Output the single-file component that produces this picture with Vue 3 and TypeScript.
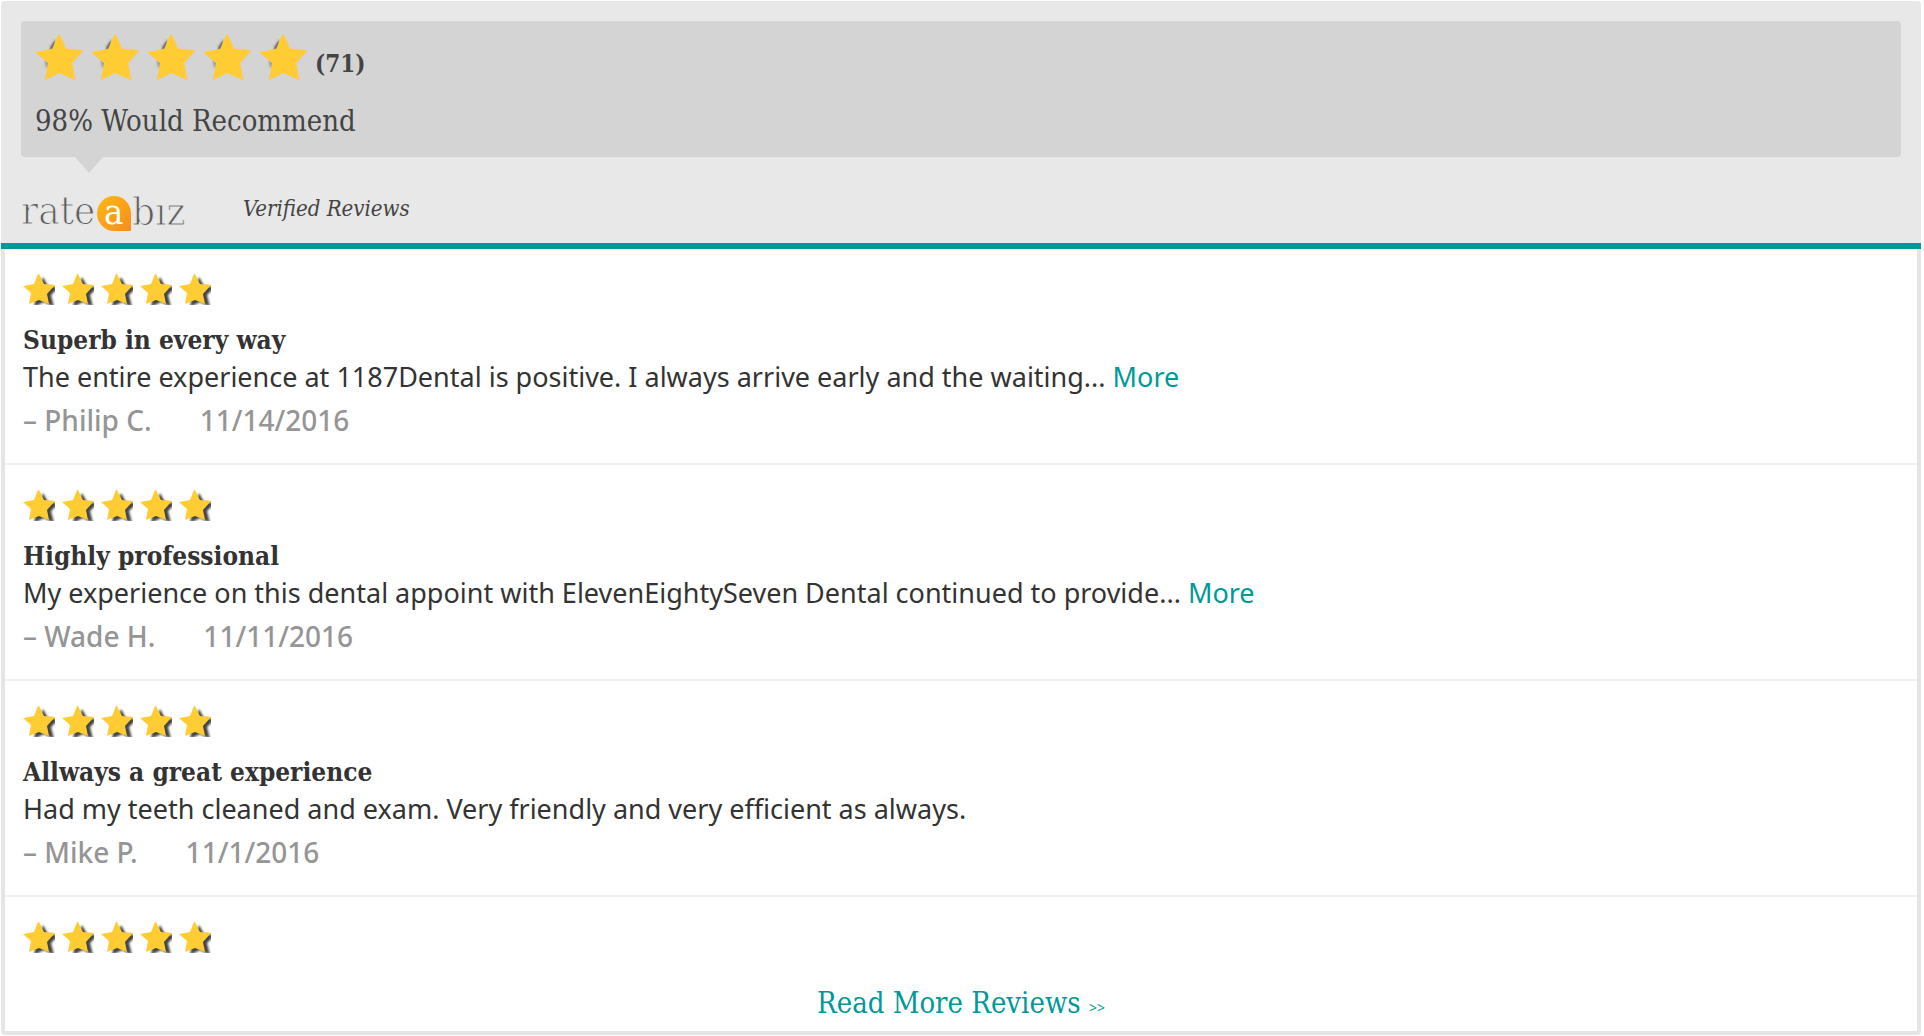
<script setup lang="ts">
interface Review {
  title?: string
  text?: string
  truncated?: boolean
  author?: string
  date?: string
}

const count = 71
const recommend = 98

const reviews: Review[] = [
  {
    title: 'Superb in every way',
    text: 'The entire experience at 1187Dental is positive. I always arrive early and the waiting...',
    truncated: true,
    author: 'Philip C.',
    date: '11/14/2016',
  },
  {
    title: 'Highly professional',
    text: 'My experience on this dental appoint with ElevenEightySeven Dental continued to provide...',
    truncated: true,
    author: 'Wade H.',
    date: '11/11/2016',
  },
  {
    title: 'Allways a great experience',
    text: 'Had my teeth cleaned and exam. Very friendly and very efficient as always.',
    author: 'Mike P.',
    date: '11/1/2016',
  },
  {},
]
</script>

<template>
  <section class="widget">
    <header class="head">
      <div class="summary">
        <div class="rating">
          <svg v-for="n in 5" :key="n" class="star-lg" viewBox="0 0 49 46" aria-hidden="true">
            <polygon class="shade" points="20,5 15,13 16,16 22,12" />
            <polygon class="shade faint" points="10,25 11,33 16,28" />
            <polygon class="glow" points="25,0 31,13 49,16 37,28 41,45 25,36" />
            <polygon class="gold" points="23,0 25,0 31,14 48,15 37,28 40,45 24,38 10,45 13,28 0,17 17,14" />
          </svg>
          <strong class="count">({{ count }})</strong>
        </div>
        <p class="recommend">{{ recommend }}% Would Recommend</p>
      </div>
      <div class="source">
        <svg class="logo" viewBox="0 0 168 40" role="img" aria-label="rateabiz">
          <defs>
            <linearGradient id="badge" x1="0" y1="0" x2="1" y2="1">
              <stop offset="0" stop-color="#fdb913" />
              <stop offset="1" stop-color="#f78d1e" />
            </linearGradient>
          </defs>
          <text class="word" x="0" y="32">rate</text>
          <path d="M76 21.500a17 17.500 0 0 1 34 0V39H93a17 17.500 0 0 1-17-17.500z" fill="url(#badge)" />
          <text class="mark" x="83" y="32">a</text>
          <text class="word" x="111" y="33">bız</text>
        </svg>
        <em class="verified">Verified Reviews</em>
      </div>
    </header>

    <ul class="list">
      <li v-for="(r, i) in reviews" :key="i" class="review">
        <div class="stars">
          <svg v-for="n in 5" :key="n" class="star-sm" viewBox="0 0 32 31" aria-hidden="true">
            <polygon class="cast" points="20,3 25,12 36,13 28,21 31,33 21,28 11,33 13,22 6,14 16,13" />
            <polygon class="gold" points="15,0 16,0 21,10 32,11 24,20 26,30 16,26 6,30 8,19 0,12 11,10" />
          </svg>
        </div>
        <template v-if="r.title">
          <h3 class="title">{{ r.title }}</h3>
          <p class="text">{{ r.text }} <a v-if="r.truncated" href="#">More</a></p>
          <p class="meta"><span>– {{ r.author }}</span><time>{{ r.date }}</time></p>
        </template>
      </li>
    </ul>

    <footer class="foot">
      <a href="#">Read More Reviews <span class="chev">&gt;&gt;</span></a>
    </footer>
  </section>
</template>

<style>
body {
  background: #fff;
}
</style>

<style scoped>
.widget {
  margin: 1px 3px 1px 1px;
  border-radius: 4px;
  background: #e5e5e5;
  padding-bottom: 4px;
  font-family: "Noto Sans", "Open Sans", sans-serif;
  color: #333;
}
a {
  color: #099;
  text-decoration: none;
}
p,
h3,
ul {
  margin: 0;
  padding: 0;
}
.head {
  padding: 20px 20px 11px;
  border-radius: 4px 4px 0 0;
  border-bottom: 6px solid #099;
  background: #e8e8e8;
  font-family: "DejaVu Serif Condensed", "DejaVu Serif", serif;
  color: #444;
}
.summary {
  position: relative;
  padding: 14px 14px 18px;
  border-radius: 4px;
  background: #d4d4d4;
}
.summary::after {
  content: "";
  position: absolute;
  top: 100%;
  left: 54px;
  border: 14px solid transparent;
  border-top: 16px solid #d4d4d4;
  border-bottom: 0;
}
.rating {
  display: flex;
  align-items: center;
  gap: 7px;
}
.star-lg {
  width: 49px;
  height: 46px;
}
.gold {
  fill: #fc3;
}
.glow {
  fill: #f3c4a4;
}
.shade {
  fill: #555;
  filter: blur(1px);
}
.faint {
  opacity: 0.5;
}
.count {
  margin-top: 12px;
  font-size: 24px;
  line-height: 34px;
}
.recommend {
  margin-top: 22px;
  font-size: 29px;
  line-height: 36px;
}
.source {
  display: flex;
  align-items: flex-start;
  gap: 54px;
  margin-top: 35px;
}
.logo {
  width: 168px;
  height: 40px;
  overflow: visible;
}
.word {
  font-size: 40px;
  fill: #5c5c5c;
  stroke: #e8e8e8;
  stroke-width: 1px;
}
.mark {
  font-size: 36px;
  fill: #fff;
}
.verified {
  font-size: 22px;
  line-height: 34px;
}
.list {
  list-style: none;
  margin: 0 4px;
  background: #fff;
}
.review {
  padding: 25px 18px 23px;
  border-bottom: 2px solid #f0f0f0;
}
.review:last-child {
  border-bottom: 0;
}
.stars {
  display: flex;
  gap: 7px;
  height: 31px;
}
.star-sm {
  width: 32px;
  height: 31px;
}
.cast {
  fill: #444;
  filter: blur(1px);
}
.title {
  margin-top: 17px;
  font: bold 26px/36px "DejaVu Serif Condensed", "DejaVu Serif", serif;
}
.text {
  font-size: 27px;
  line-height: 38px;
}
.meta {
  display: flex;
  gap: 48px;
  margin-top: 4px;
  font-size: 28px;
  font-weight: 500;
  line-height: 40px;
  color: #959595;
}
.foot {
  margin: 0 4px;
  padding: 9px 0 10px;
  background: #fff;
  text-align: center;
  font: 29px/36px "DejaVu Serif Condensed", "DejaVu Serif", serif;
}
.chev {
  font: 14px/14px "Noto Sans", sans-serif;
}
</style>
